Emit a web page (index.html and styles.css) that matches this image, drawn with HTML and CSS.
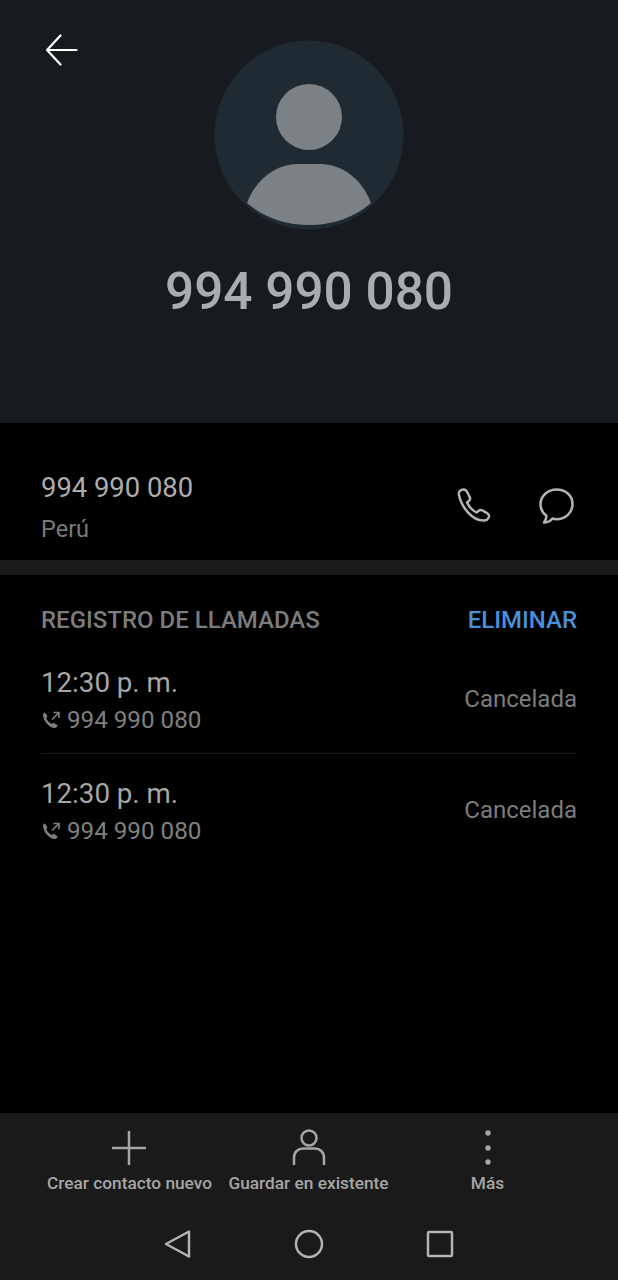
FILE: index.html
```html
<!DOCTYPE html>
<html>
	<head>
		<meta charset="utf-8">
		<title>994 990 080</title>
		<link rel="stylesheet" href="styles.css">
	</head>
	<body>
		<div class="phone">
			<header class="top">
				<svg class="back" width="34" height="34" viewBox="0 0 34 34"><path d="M31.500 17H2.500M15.500 2.500 2 17l13.500 14.500"/></svg>
				<svg class="avatar" width="190" height="190" viewBox="0 0 190 190">
					<circle cx="95" cy="95" r="94.500" fill="#1f2a33"/>
					<circle cx="95" cy="77" r="33" fill="#7c8186"/>
					<path d="M33 163C42 139 62 124 84 124h22c22 0 42 15 51 39-16 14-37 22-62 22s-46-8-62-22z" fill="#7c8186"/>
				</svg>
				<h1 class="name">994 990 080</h1>
			</header>

			<section class="number">
				<div class="number-text">
					<div class="num">994 990 080</div>
					<div class="country">Perú</div>
				</div>
				<div class="actions">
					<svg width="38" height="38" viewBox="0 0 38 38"><path d="M3 8C2 4.500 5 2.500 7.500 2.500c2 0 3 1 3.800 2.800l2.500 5c.7 1.500.3 2.500-.8 3.500l-2 1.700c2 4 5.500 8 9.500 10l2.200-1.800c1.200-1 2.300-1 3.500-.4l4.500 2.500c2 1.100 2.800 2.500 2.200 4.300-.8 2-2.700 3.400-5 3.400C16 33.800 5.500 20 3 8z"/></svg>
					<svg width="38" height="38" viewBox="0 0 38 38"><path d="M18.500 2.500C10 2.500 2.500 9 2.500 17c0 5 2.300 9 5.700 11.500.3 2.500-.5 5-2.200 7 3.500 0 6.500-1.500 8.500-4 1.500.5 3 .7 4 .7 9 0 16-6.500 16-15.200S27.500 2.500 18.500 2.500z"/></svg>
				</div>
			</section>

			<section class="log">
				<div class="log-head">
					<span class="log-title">REGISTRO DE LLAMADAS</span>
					<span class="log-del">ELIMINAR</span>
				</div>
				<div class="call">
					<div>
						<div class="time">12:30 p. m.</div>
						<div class="call-num">
							<svg width="20" height="20" viewBox="0 0 20 20"><path class="fill" d="M2 4.500C2 3.500 3 2.500 4 2.500l2.500 3.800-1.300 2c.8 2 3 4.500 5.500 5.700l2-1.300 3.800 2.600c0 1.200-1.200 2.700-2.500 2.700C8 18 2 10.500 2 4.500z"/><path d="M11 9.500 17.500 3M12.500 2.500h5.500V8"/></svg>
							994 990 080
						</div>
					</div>
					<span class="status">Cancelada</span>
				</div>
				<div class="call">
					<div>
						<div class="time">12:30 p. m.</div>
						<div class="call-num">
							<svg width="20" height="20" viewBox="0 0 20 20"><path class="fill" d="M2 4.500C2 3.500 3 2.500 4 2.500l2.500 3.800-1.300 2c.8 2 3 4.500 5.500 5.700l2-1.300 3.800 2.600c0 1.200-1.200 2.700-2.500 2.700C8 18 2 10.500 2 4.500z"/><path d="M11 9.500 17.500 3M12.500 2.500h5.500V8"/></svg>
							994 990 080
						</div>
					</div>
					<span class="status">Cancelada</span>
				</div>
			</section>

			<footer class="bottom">
				<div class="tools">
					<div class="tool">
						<svg width="38" height="38" viewBox="0 0 38 38"><path d="M18 2v34M1 19h34"/></svg>
						<span>Crear contacto nuevo</span>
					</div>
					<div class="tool">
						<svg width="38" height="38" viewBox="0 0 38 38"><circle cx="19" cy="9" r="7.500"/><path d="M4 36v-7c0-6 4-9.500 9-9.500h12c5 0 9 3.500 9 9.500v7"/></svg>
						<span>Guardar en existente</span>
					</div>
					<div class="tool">
						<svg width="38" height="38" viewBox="0 0 38 38"><circle class="fill" cx="19" cy="4" r="2.700"/><circle class="fill" cx="19" cy="19" r="2.700"/><circle class="fill" cx="19" cy="33" r="2.700"/></svg>
						<span>Más</span>
					</div>
				</div>
				<nav class="nav">
					<svg width="30" height="30" viewBox="0 0 30 30"><path d="M26 2.500v25L3 15z"/></svg>
					<svg width="30" height="30" viewBox="0 0 30 30"><circle cx="15" cy="15" r="13"/></svg>
					<svg width="30" height="30" viewBox="0 0 30 30"><rect x="3" y="3" width="24" height="24" rx="1"/></svg>
				</nav>
			</footer>
		</div>
	</body>
</html>
```

FILE: styles.css
```css
html,body{margin: 0; background-color: #000;}
body{font-family: Roboto, "Noto Sans", sans-serif; color: #b3b3b3;}
svg{display: block; fill: none;}
.phone{width: 618px; height: 1280px; display: flex; flex-direction: column; overflow: hidden;}

.top{position: relative; height: 423px; box-sizing: border-box; padding-top: 40px; background-color: #171b1f; display: flex; flex-direction: column; align-items: center;}
.back{position: absolute; left: 45px; top: 33px;}
.back path{stroke: #fff; stroke-width: 2.200; stroke-linecap: round; stroke-linejoin: round;}
.name{margin: 32px 0 0; font-size: 51.300px; line-height: 60px; font-weight: 500; color: #aaacae;}

.number{height: 137px; box-sizing: border-box; padding: 0 42px 0 41px; display: flex; justify-content: space-between; align-items: flex-start;}
.number-text{padding-top: 49px;}
.num{font-size: 27.400px; line-height: 32px; color: #adadad;}
.country{margin-top: 9px; font-size: 23.500px; line-height: 32px; color: #7b7b7b;}
.actions{display: flex; gap: 44px; margin-top: 64px;}
.actions svg{stroke: #b3b3b3; stroke-width: 2.500; stroke-linejoin: round;}

.log{flex: 1; border-top: 15px solid #1a1a1a; padding: 0 41px;}
.log-head{display: flex; justify-content: space-between; align-items: center; height: 46px; padding-top: 22px; font-size: 24px; font-weight: 500;}
.log-title{color: #7c7c7c;}
.log-del{color: #4a90d9;}
.call{height: 110px; box-sizing: border-box; display: flex; justify-content: space-between; align-items: center; padding-top: 4px;}
.call + .call{border-top: 1px solid #1c1c1c;}
.time{font-size: 27.700px; line-height: 36px; color: #a6a6a6;}
.call-num{display: flex; align-items: center; gap: 6px; margin-top: 4px; font-size: 24.200px; line-height: 30px; color: #808080;}
.call-num svg{stroke: #808080; stroke-width: 1.600;}
.call-num .fill{fill: #808080; stroke: none;}
.status{margin-bottom: 2px; font-size: 24px; color: #7c7c7c;}

.bottom{height: 167px; background-color: #1a1a1a;}
.tools{display: grid; grid-template-columns: repeat(3, 179px); padding: 16px 0 0 40px;}
.tool{display: flex; flex-direction: column; align-items: center; gap: 5px; font-size: 17.300px; line-height: 22px; font-weight: 500; color: #a6a6a6; white-space: nowrap;}
.tool svg{stroke: #a6a6a6; stroke-width: 2.500;}
.tool .fill{fill: #a6a6a6; stroke: none;}
.nav{display: flex; justify-content: center; gap: 101px; margin-top: 35px;}
.nav svg{stroke: #b3b3b3; stroke-width: 2.500; stroke-linejoin: round;}
```
